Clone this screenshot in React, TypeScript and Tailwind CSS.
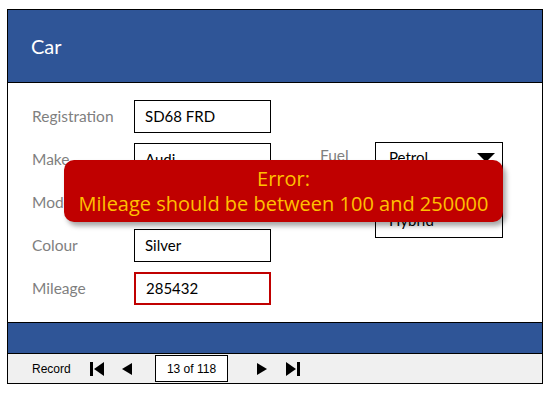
import React from 'react';

const labelFont = { fontFamily: '"Lato", "Open Sans", sans-serif' };

function Field({ label, value, error }: { label: string; value: string; error?: boolean }) {
  return (
    <div className="flex h-[33px] items-center">
      <span className="w-[102px] text-[15.5px] text-[#7f7f7f]">{label}</span>
      <div
        className={`flex h-[33px] w-[137px] items-center px-[10px] text-[15px] text-black ${
          error ? 'border-2 border-[#c00000]' : 'border border-black'
        }`}
      >
        {value}
      </div>
    </div>
  );
}

function NavIcon({ kind }: { kind: 'first' | 'prev' | 'next' | 'last' }) {
  if (kind === 'first')
    return (
      <svg width="14" height="14" viewBox="0 0 14 14">
        <rect x="0" y="0" width="3" height="14" fill="#000" />
        <polygon points="14,0 14,14 4,7" fill="#000" />
      </svg>
    );
  if (kind === 'last')
    return (
      <svg width="14" height="14" viewBox="0 0 14 14">
        <polygon points="0,0 0,14 10,7" fill="#000" />
        <rect x="11" y="0" width="3" height="14" fill="#000" />
      </svg>
    );
  if (kind === 'prev')
    return (
      <svg width="10" height="12" viewBox="0 0 10 12">
        <polygon points="10,0 10,12 0,6" fill="#000" />
      </svg>
    );
  return (
    <svg width="10" height="12" viewBox="0 0 10 12">
      <polygon points="0,0 0,12 10,6" fill="#000" />
    </svg>
  );
}

export default function App() {
  return (
    <div className="h-[393px] w-[554px] bg-white pl-[7px] pt-[9px]">
      <div className="flex h-[375px] w-[536px] flex-col border border-black" style={labelFont}>
        <header className="flex h-[73px] shrink-0 items-center border-b border-black bg-[#2f5597] pl-[23px]">
          <h1 className="text-[20px] text-white">Car</h1>
        </header>

        <div className="relative flex flex-1 pl-[24px] pt-[17px]">
          <div className="flex w-[239px] flex-col gap-[10px]">
            <Field label="Registration" value="SD68 FRD" />
            <Field label="Make" value="Audi" />
            <Field label="Model" value="A4" />
            <Field label="Colour" value="Silver" />
            <Field label="Mileage" value="285432" error />
          </div>

          <div className="ml-[49px] mt-[42px] flex items-start">
            <span className="flex h-[28px] w-[55px] items-center text-[15.5px] text-[#7f7f7f]">Fuel</span>
            <div className="flex h-[96px] w-[128px] flex-col border border-black px-[13px] text-[15px] text-black">
              <div className="flex h-[28px] items-center justify-between">
                <span>Petrol</span>
                <svg width="18" height="9" viewBox="0 0 18 9" className="mr-[-6px]">
                  <polygon points="0,0 18,0 9,9" fill="#000" />
                </svg>
              </div>
              <div className="flex h-[33px] items-center">Diesel</div>
              <div className="flex h-[33px] items-center">Hybrid</div>
            </div>
          </div>

          <div
            className="absolute left-[56px] top-[77px] flex h-[62px] w-[439px] flex-col items-center justify-center rounded-[10px] bg-[#c00000] text-[20px] leading-[25px] text-[#ffc000] shadow-[3px_4px_5px_rgba(0,0,0,0.35)]"
            style={{ fontFamily: '"Open Sans", "Noto Sans", sans-serif' }}
          >
            <span>Error:</span>
            <span>Mileage should be between 100 and 250000</span>
          </div>
        </div>

        <div className="h-[32px] shrink-0 border-y border-black bg-[#2f5597]" />

        <nav
          className="flex h-[29px] shrink-0 items-center bg-[#f0f0f0] pl-[24px] text-[12px] text-black"
          style={{ fontFamily: '"Liberation Sans", Arial, sans-serif' }}
        >
          <span className="w-[58px]">Record</span>
          <NavIcon kind="first" />
          <span className="ml-[18px]"><NavIcon kind="prev" /></span>
          <div className="ml-[23px] flex h-[27px] w-[73px] items-center justify-center border border-black bg-white">
            13 of 118
          </div>
          <span className="ml-[29px]"><NavIcon kind="next" /></span>
          <span className="ml-[19px]"><NavIcon kind="last" /></span>
        </nav>
      </div>
    </div>
  );
}
